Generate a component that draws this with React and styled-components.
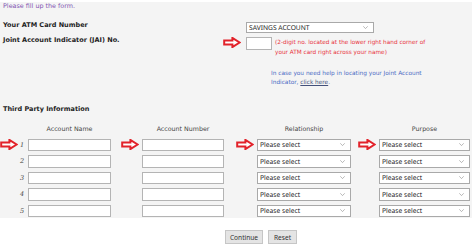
import React from "react";
import styled, { createGlobalStyle, css } from "styled-components";

const Global = createGlobalStyle`
  html, body { margin: 0; padding: 0; background: #fff; }
  body {
    font-family: "DejaVu Sans", Verdana, sans-serif;
    width: 474px; height: 250px; overflow: hidden;
    text-rendering: geometricPrecision;
  }
  * { box-sizing: border-box; }
`;

const columns = css`
  display: grid;
  grid-template-columns: 19px 9px 83px 31px 82px 33px 94px 28px 91px;
`;

const Panel = styled.div`
  margin-top: 2px;
  width: 472px;
  background: #f4f4f4;
  padding: 0 0 1px 0;
`;

const Intro = styled.div`
  padding: 0 0 0 3px;
  font-size: 6.4px;
  line-height: 8px;
  color: #8355b3;
`;

const TopGrid = styled.div`
  display: grid;
  grid-template-columns: 220px 23px 1fr;
  grid-template-rows: 10px auto auto;
  row-gap: 5px;
  margin-top: 12px;
  padding-left: 3px;
`;

const Label = styled.div`
  font-weight: bold;
  font-size: 6.5px;
  line-height: 8px;
  color: #1e1e1e;
  margin-top: ${p => p.$mt || 0}px;
  white-space: nowrap;
`;

const ArrowCell = styled.div`
  display: flex;
  align-items: flex-start;
`;

const SelectWrap = styled.div`
  position: relative;
  width: ${p => p.$w}px;
  height: ${p => p.$h || 12.5}px;
  background: #fff;
  border: 1px solid #a9a9a9;
  display: flex;
  align-items: center;
  padding-left: 2px;
  font-family: "Noto Sans", sans-serif;
  font-size: 6.7px;
  color: #1a1a1a;
  white-space: nowrap;
`;

const Chevron = styled.svg`
  position: absolute;
  right: 5px;
  top: 50%;
  margin-top: -1.5px;
`;

const JaiRow = styled.div`
  display: flex;
  align-items: flex-start;
  gap: 3px;
`;

const TextInput = styled.div`
  width: ${p => p.$w}px;
  height: ${p => p.$h || 12.5}px;
  background: #fff;
  border: 1px solid #b4b4b4;
  flex: none;
`;

const Note = styled.div`
  color: #e8323c;
  font-size: 5.75px;
  line-height: 10px;
  margin-top: 1px;
  white-space: nowrap;
`;

const Help = styled.div`
  grid-column: 3;
  margin-left: 25px;
  margin-top: 7px;
  color: #4b6cc4;
  font-size: 5.8px;
  line-height: 8.5px;
  white-space: nowrap;
  a { color: #43507a; text-decoration: underline; }
`;

const SectionTitle = styled.div`
  padding-left: 3px;
  margin-top: 18px;
  font-weight: bold;
  font-size: 6.5px;
  line-height: 8px;
  color: #1e1e1e;
`;

const HeadGrid = styled.div`
  ${columns};
  margin-top: 12.5px;
`;

const Head = styled.div`
  grid-column: ${p => p.$col};
  text-align: center;
  font-size: 6.3px;
  line-height: 8px;
  color: #444;
  white-space: nowrap;
`;

const BodyGrid = styled.div`
  ${columns};
  grid-auto-rows: 12.5px;
  row-gap: 4px;
  margin-top: 5px;
`;

const Cell = styled.div`
  grid-column: ${p => p.$col};
  display: flex;
  align-items: center;
  justify-content: ${p => (p.$end ? "flex-end" : "flex-start")};
  padding-right: ${p => (p.$end ? 3 : 0)}px;
`;

const Num = styled.div`
  grid-column: 2;
  font-style: italic;
  font-family: "DejaVu Serif", serif;
  font-size: 6.5px;
  color: #444;
  display: flex;
  align-items: center;
  padding-left: 1px;
`;

const Buttons = styled.div`
  display: flex;
  gap: 5px;
  padding-left: 225px;
  margin-top: 12px;
`;

const Button = styled.button`
  height: 14px;
  width: ${p => p.$w}px;
  padding: 0;
  background: #e4e4e4;
  border: 1px solid #c6c6c6;
  border-radius: 0;
  font-family: "Noto Sans", sans-serif;
  font-size: 6.6px;
  color: #333;
`;

const Arrow = () => (
  <svg width="18" height="11" viewBox="0 0 18 11">
    <path
      d="M1.2 3.4 H9.4 V0.9 L16.6 5.5 L9.4 10.1 V7.6 H1.2 Z"
      fill="#fff"
      stroke="#e2222a"
      strokeWidth="2"
      strokeLinejoin="miter"
    />
  </svg>
);

const Select = ({ w, h, children }) => (
  <SelectWrap $w={w} $h={h}>
    {children}
    <Chevron width="5" height="3" viewBox="0 0 5 3">
      <path d="M0.3 0.3 L2.5 2.6 L4.7 0.3" fill="none" stroke="#8a8a8a" strokeWidth="0.6" />
    </Chevron>
  </SelectWrap>
);

const rows = [1, 2, 3, 4, 5];

export default function App() {
  return (
    <>
      <Global />
      <Panel>
        <Intro>Please fill up the form.</Intro>
        <TopGrid>
          <Label $mt={-1}>Your ATM Card Number</Label>
          <span />
          <Select w={128} h={10.5}>SAVINGS ACCOUNT</Select>
          <Label $mt={-1}>Joint Account Indicator (JAI) No.</Label>
          <ArrowCell>
            <Arrow />
          </ArrowCell>
          <JaiRow>
            <TextInput $w={26} $h={12.5} />
            <Note>
              (2-digit no. located at the lower right hand corner of
              <br />
              your ATM card right across your name)
            </Note>
          </JaiRow>
          <Help>
            In case you need help in locating your Joint Account
            <br />
            Indicator, <a>click here</a>.
          </Help>
        </TopGrid>
        <SectionTitle>Third Party Information</SectionTitle>
        <HeadGrid>
          <Head $col={3}>Account Name</Head>
          <Head $col={5}>Account Number</Head>
          <Head $col={7}>Relationship</Head>
          <Head $col={9}>Purpose</Head>
        </HeadGrid>
        <BodyGrid>
          {rows.map(n => (
            <React.Fragment key={n}>
              <Cell $col={1}>{n === 1 && <Arrow />}</Cell>
              <Num>{n}</Num>
              <Cell $col={3}><TextInput $w={83} /></Cell>
              <Cell $col={4} $end>{n === 1 && <Arrow />}</Cell>
              <Cell $col={5}><TextInput $w={82} /></Cell>
              <Cell $col={6} $end>{n === 1 && <Arrow />}</Cell>
              <Cell $col={7}><Select w={94}>Please select</Select></Cell>
              <Cell $col={8} $end>{n === 1 && <Arrow />}</Cell>
              <Cell $col={9}><Select w={91}>Please select</Select></Cell>
            </React.Fragment>
          ))}
        </BodyGrid>
      </Panel>
      <Buttons>
        <Button $w={38}>Continue</Button>
        <Button $w={29}>Reset</Button>
      </Buttons>
    </>
  );
}
